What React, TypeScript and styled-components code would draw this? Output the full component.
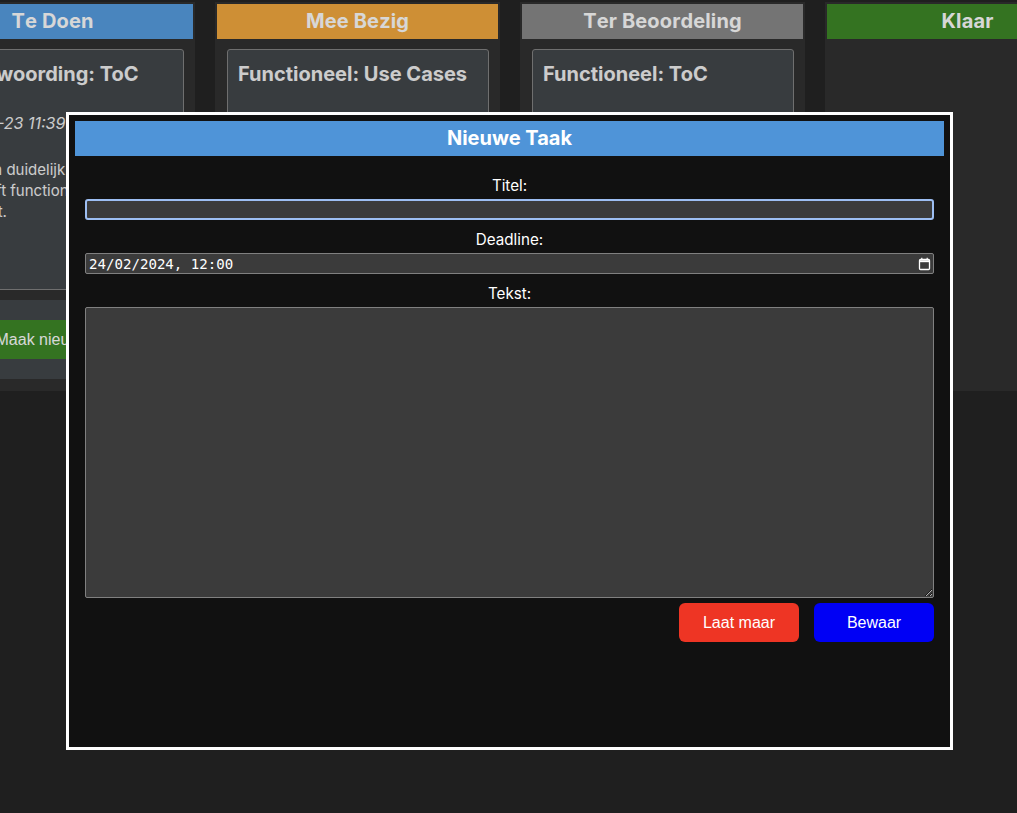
import React from "react";
import styled, { createGlobalStyle } from "styled-components";

const Global = createGlobalStyle`
  html, body { margin: 0; padding: 0; height: 100%; overflow: hidden; background: #232323; }
  body { font-family: Inter, "Liberation Sans", sans-serif; color: #fff; }
  #root { height: 100%; }
`;

const Board = styled.main`
  display: flex;
  gap: 20px;
  height: 389px;
  width: max-content;
  margin-left: -90px;
  padding-top: 2px;
`;

const Column = styled.section`
  width: 285px;
  background: #2e2e2e;
  padding: 2px;
  box-sizing: border-box;
  display: flex;
  flex-direction: column;
`;

const ColumnHeader = styled.h2<{ $color: string }>`
  margin: 0;
  height: 35px;
  background: ${(p) => p.$color};
  font: 700 20px/35px Inter, sans-serif;
  font-kerning: none;
  letter-spacing: 0.15px;
  color: #f0f0f0;
  text-align: center;
`;

const Card = styled.article`
  margin: 10px 9px 0 10px;
  height: 241px;
  flex: none;
  box-sizing: border-box;
  background: #3f4347;
  border: 1px solid #7c7c7c;
  border-radius: 3px;
  padding: 11px 10px;
  color: #e4e4e4;
`;

const CardTitle = styled.h3<{ $indent?: number }>`
  margin: 0;
  font: 700 20px/26px Inter, sans-serif;
  white-space: nowrap;
  text-indent: ${(p) => p.$indent ?? 0}px;
`;

const CardDate = styled.p`
  margin: 25px 0 0;
  font: italic 400 16px/22px Inter, sans-serif;
  white-space: nowrap;
  text-indent: -3px;
`;

const CardBody = styled.p`
  margin: 25px 0 0;
  font: 400 15px/21px Inter, sans-serif;
  white-space: nowrap;
`;

const Footer = styled.div`
  margin: 10px 9px 0 10px;
  height: 79px;
  background: #3f4347;
  padding-top: 20px;
  box-sizing: border-box;
  display: flex;
  justify-content: center;
`;

const NewButton = styled.button`
  width: 262px;
  height: 39px;
  border: 0;
  background: #3a8025;
  color: #f0f0f0;
  font: 400 16px "Liberation Sans", Arial, sans-serif;
  padding: 0 0 0 14px;
`;

const Backdrop = styled.div`
  position: fixed;
  inset: 0;
  background: rgba(0, 0, 0, 0.1);
`;

const Modal = styled.form`
  position: fixed;
  left: 66px;
  top: 112px;
  width: 887px;
  height: 638px;
  box-sizing: border-box;
  border: 3px solid #fff;
  background: #111;
  padding: 6px;
  display: flex;
  flex-direction: column;
`;

const ModalHeader = styled.h2`
  margin: 0;
  height: 35px;
  background: #4f94d8;
  color: #fff;
  font: 700 20px/35px Inter, sans-serif;
  text-align: center;
`;

const Fields = styled.div`
  padding: 19px 10px 0;
  display: flex;
  flex-direction: column;
`;

const Label = styled.label`
  display: block;
  font: 400 15.2px/22px Inter, sans-serif;
  text-align: center;
  color: #fff;
  height: 24px;
  margin-top: 9px;
  &:first-child { margin-top: 0; }
`;

const TextInput = styled.input<{ $focused?: boolean }>`
  display: block;
  width: 100%;
  height: 21px;
  box-sizing: border-box;
  background: #3b3b3b;
  color: #fff;
  border: 1px solid #808080;
  border-radius: 2px;
  padding: 1px 3px;
  font: 400 14.1px "DejaVu Sans Mono", monospace;
  outline: none;
  ${(p) => p.$focused && "border: 2px solid #9dbef2; border-radius: 3px;"}
`;

const DateWrap = styled.div`
  position: relative;
`;

const CalendarIcon = styled.svg`
  position: absolute;
  right: 3px;
  top: 4px;
  width: 13px;
  height: 14px;
`;

const TextArea = styled.textarea`
  display: block;
  width: 100%;
  height: 291px;
  box-sizing: border-box;
  background: #3b3b3b;
  color: #fff;
  border: 1px solid #808080;
  border-radius: 2px;
  outline: none;
  margin: 0;
`;

const Actions = styled.div`
  display: flex;
  justify-content: flex-end;
  gap: 15px;
  margin-top: 5px;
`;

const ActionButton = styled.button<{ $color: string }>`
  width: 120px;
  height: 39px;
  border: 0;
  border-radius: 6px;
  background: ${(p) => p.$color};
  color: #fff;
  font: 400 16px "Liberation Sans", Arial, sans-serif;
  padding: 0;
`;

export default function App() {
  return (
    <>
      <Global />
      <Board>
        <Column>
          <ColumnHeader $color="#5295d4">Te Doen</ColumnHeader>
          <Card>
            <CardTitle $indent={-2}>Verantwoording: ToC</CardTitle>
            <CardDate>2024-02-23 11:39</CardDate>
            <CardBody>
              Maak een duidelijk
              <br />
              Omschrijft functioneel
              <br />
              wat werkt.
            </CardBody>
          </Card>
          <Footer>
            <NewButton type="button">Maak nieuwe taak</NewButton>
          </Footer>
        </Column>
        <Column>
          <ColumnHeader $color="#e6a03c">Mee Bezig</ColumnHeader>
          <Card>
            <CardTitle>Functioneel: Use Cases</CardTitle>
          </Card>
        </Column>
        <Column>
          <ColumnHeader $color="#828282">Ter Beoordeling</ColumnHeader>
          <Card>
            <CardTitle>Functioneel: ToC</CardTitle>
          </Card>
        </Column>
        <Column>
          <ColumnHeader $color="#3a8025">Klaar</ColumnHeader>
        </Column>
      </Board>
      <Backdrop />
      <Modal>
        <ModalHeader>Nieuwe Taak</ModalHeader>
        <Fields>
          <Label htmlFor="titel">Titel:</Label>
          <TextInput id="titel" $focused readOnly />
          <Label htmlFor="deadline">Deadline:</Label>
          <DateWrap>
            <TextInput id="deadline" readOnly value="24/02/2024, 12:00" />
            <CalendarIcon viewBox="0 0 13 14" fill="none" stroke="#fff">
              <rect x="1.5" y="2.5" width="10" height="10" rx="1" strokeWidth="1.3" />
              <path d="M1.5 4.2h10" strokeWidth="2" />
              <path d="M3.8 .8v2M9.2 .8v2" strokeWidth="1.2" />
            </CalendarIcon>
          </DateWrap>
          <Label htmlFor="tekst">Tekst:</Label>
          <TextArea id="tekst" readOnly />
          <Actions>
            <ActionButton type="button" $color="#ee3524">Laat maar</ActionButton>
            <ActionButton type="button" $color="#0000f5">Bewaar</ActionButton>
          </Actions>
        </Fields>
      </Modal>
    </>
  );
}
